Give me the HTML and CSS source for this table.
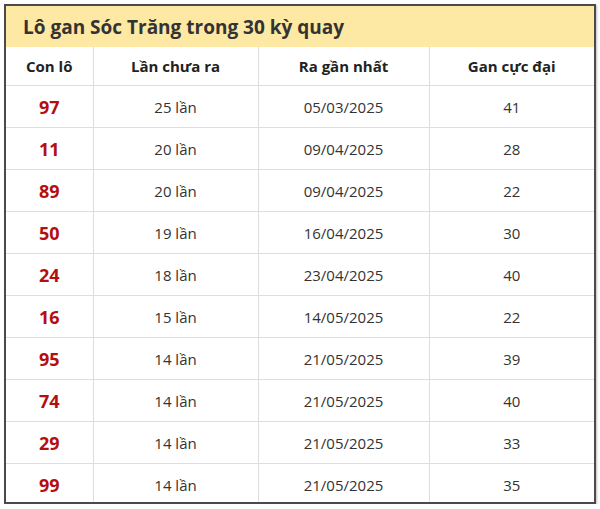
FILE: index.html
```
<!DOCTYPE html>
<html lang="vi">
<head>
<meta charset="utf-8">
<link rel="stylesheet" href="styles.css">
</head>
<body>
<div class="box">
  <div class="title">Lô gan Sóc Trăng trong 30 kỳ quay</div>
  <table class="tbl">
    <colgroup>
      <col class="c1"><col class="c2"><col class="c3"><col class="c4">
    </colgroup>
    <thead>
      <tr><th>Con lô</th><th>Lần chưa ra</th><th>Ra gần nhất</th><th>Gan cực đại</th></tr>
    </thead>
    <tbody>
      <tr><td class="num">97</td><td>25 lần</td><td>05/03/2025</td><td>41</td></tr>
      <tr><td class="num">11</td><td>20 lần</td><td>09/04/2025</td><td>28</td></tr>
      <tr><td class="num">89</td><td>20 lần</td><td>09/04/2025</td><td>22</td></tr>
      <tr><td class="num">50</td><td>19 lần</td><td>16/04/2025</td><td>30</td></tr>
      <tr><td class="num">24</td><td>18 lần</td><td>23/04/2025</td><td>40</td></tr>
      <tr><td class="num">16</td><td>15 lần</td><td>14/05/2025</td><td>22</td></tr>
      <tr><td class="num">95</td><td>14 lần</td><td>21/05/2025</td><td>39</td></tr>
      <tr><td class="num">74</td><td>14 lần</td><td>21/05/2025</td><td>40</td></tr>
      <tr><td class="num">29</td><td>14 lần</td><td>21/05/2025</td><td>33</td></tr>
      <tr><td class="num">99</td><td>14 lần</td><td>21/05/2025</td><td>35</td></tr>
    </tbody>
  </table>
</div>
</body>
</html>
```
FILE: styles.css
```
html, body {
  margin: 0;
  padding: 0;
  background: #ffffff;
}
body {
  padding: 4px 0 0 4px;
  font-family: "Open Sans", "Noto Sans", sans-serif;
  color: #333333;
}
.box {
  width: 588px;
  height: 496px;
  border: 2px solid #4a4a4a;
  box-shadow: 1px 1px 2px rgba(0,0,0,0.25);
  overflow: hidden;
  background: #ffffff;
}
.title {
  height: 41px;
  background: #fde8a4;
  box-sizing: border-box;
  padding-left: 17px;
  padding-top: 1px;
  line-height: 41px;
  font-size: 19px;
  font-weight: 700;
  color: #333333;
}
.tbl {
  width: 588px;
  border-collapse: collapse;
  table-layout: fixed;
}
.c1 { width: 87px; }
.c2 { width: 165px; }
.c3 { width: 171px; }
.c4 { width: 165px; }
.tbl th, .tbl td {
  border: 1px solid #dedede;
  text-align: center;
  padding: 0;
}
.tbl tr > :first-child { border-left: none; }
.tbl tr > :last-child { border-right: none; }
.tbl thead tr th { border-top: none; }
.tbl th {
  height: 38px;
  font-size: 15px;
  font-weight: 700;
  color: #222222;
}
.tbl td {
  height: 41px;
  font-size: 15px;
  color: #333333;
}
.tbl td.num {
  font-size: 18px;
  font-weight: 700;
  color: #b40f0f;
}
```
